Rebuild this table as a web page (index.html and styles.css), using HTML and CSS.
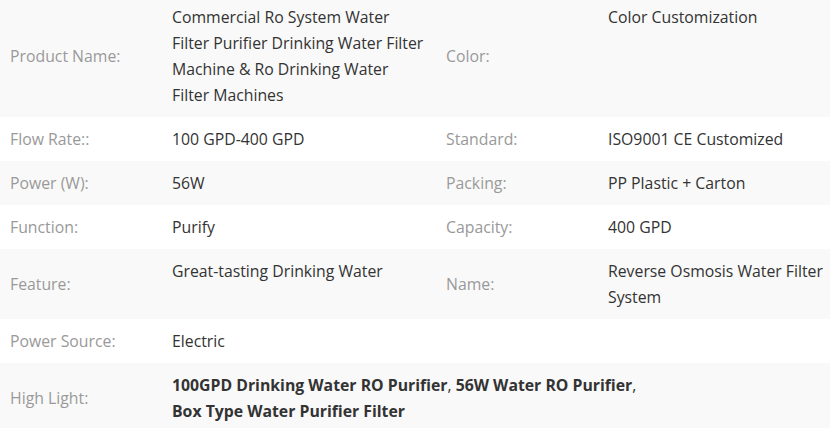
FILE: index.html
```html
<!DOCTYPE html>
<html lang="en">
<head>
<meta charset="UTF-8">
<meta name="viewport" content="width=device-width, initial-scale=1.0">
<title>Product Details</title>
<link rel="stylesheet" href="styles.css">
</head>
<body>

<div class="specs">
    <table class="spec-table">
        <colgroup>
            <col class="col-label">
            <col class="col-value-wide">
            <col class="col-label">
            <col class="col-value">
        </colgroup>
        <tr>
            <th>Product Name:</th>
            <td>Commercial Ro System Water Filter Purifier Drinking Water Filter Machine &amp; Ro Drinking Water Filter Machines</td>
            <th>Color:</th>
            <td>Color Customization</td>
        </tr>
        <tr>
            <th>Flow Rate::</th>
            <td>100 GPD-400 GPD</td>
            <th>Standard:</th>
            <td>ISO9001 CE Customized</td>
        </tr>
        <tr>
            <th>Power (W):</th>
            <td>56W</td>
            <th>Packing:</th>
            <td>PP Plastic + Carton</td>
        </tr>
        <tr>
            <th>Function:</th>
            <td>Purify</td>
            <th>Capacity:</th>
            <td>400 GPD</td>
        </tr>
        <tr>
            <th>Feature:</th>
            <td>Great-tasting Drinking Water</td>
            <th>Name:</th>
            <td>Reverse Osmosis Water Filter System</td>
        </tr>
        <tr>
            <th>Power Source:</th>
            <td>Electric</td>
            <th></th>
            <td></td>
        </tr>
        <tr>
            <th>High Light:</th>
            <td colspan="3" class="highlight">
                <strong>100GPD Drinking Water RO Purifier</strong>, <strong>56W Water RO Purifier</strong>,<br>
                <strong>Box Type Water Purifier Filter</strong>
            </td>
        </tr>
    </table>
</div>

</body>
</html>
```

FILE: styles.css
```css
body {
    font-family: "Open Sans", Arial, sans-serif;
    margin: 0;
    padding: 0;
    background: #fff;
}
.specs {
    margin-top: -5px;
}
.spec-table {
    width: 830px;
    border-collapse: collapse;
    table-layout: fixed;
    font-size: 15.8px;
    line-height: 26px;
}
.col-label {
    width: 162px;
}
.col-value-wide {
    width: 274px;
}
.col-value {
    width: 232px;
}
.spec-table tr:nth-child(odd) {
    background-color: #f9f9f9;
}
.spec-table th {
    font-weight: normal;
    text-align: left;
    color: #999;
    vertical-align: middle;
    padding: 9px 10px;
}
.spec-table td {
    color: #333;
    vertical-align: top;
    padding: 9px 8px 9px 10px;
}
.spec-table td:last-child {
    padding-right: 0;
}
.spec-table .highlight strong {
    font-weight: bold;
}
```
